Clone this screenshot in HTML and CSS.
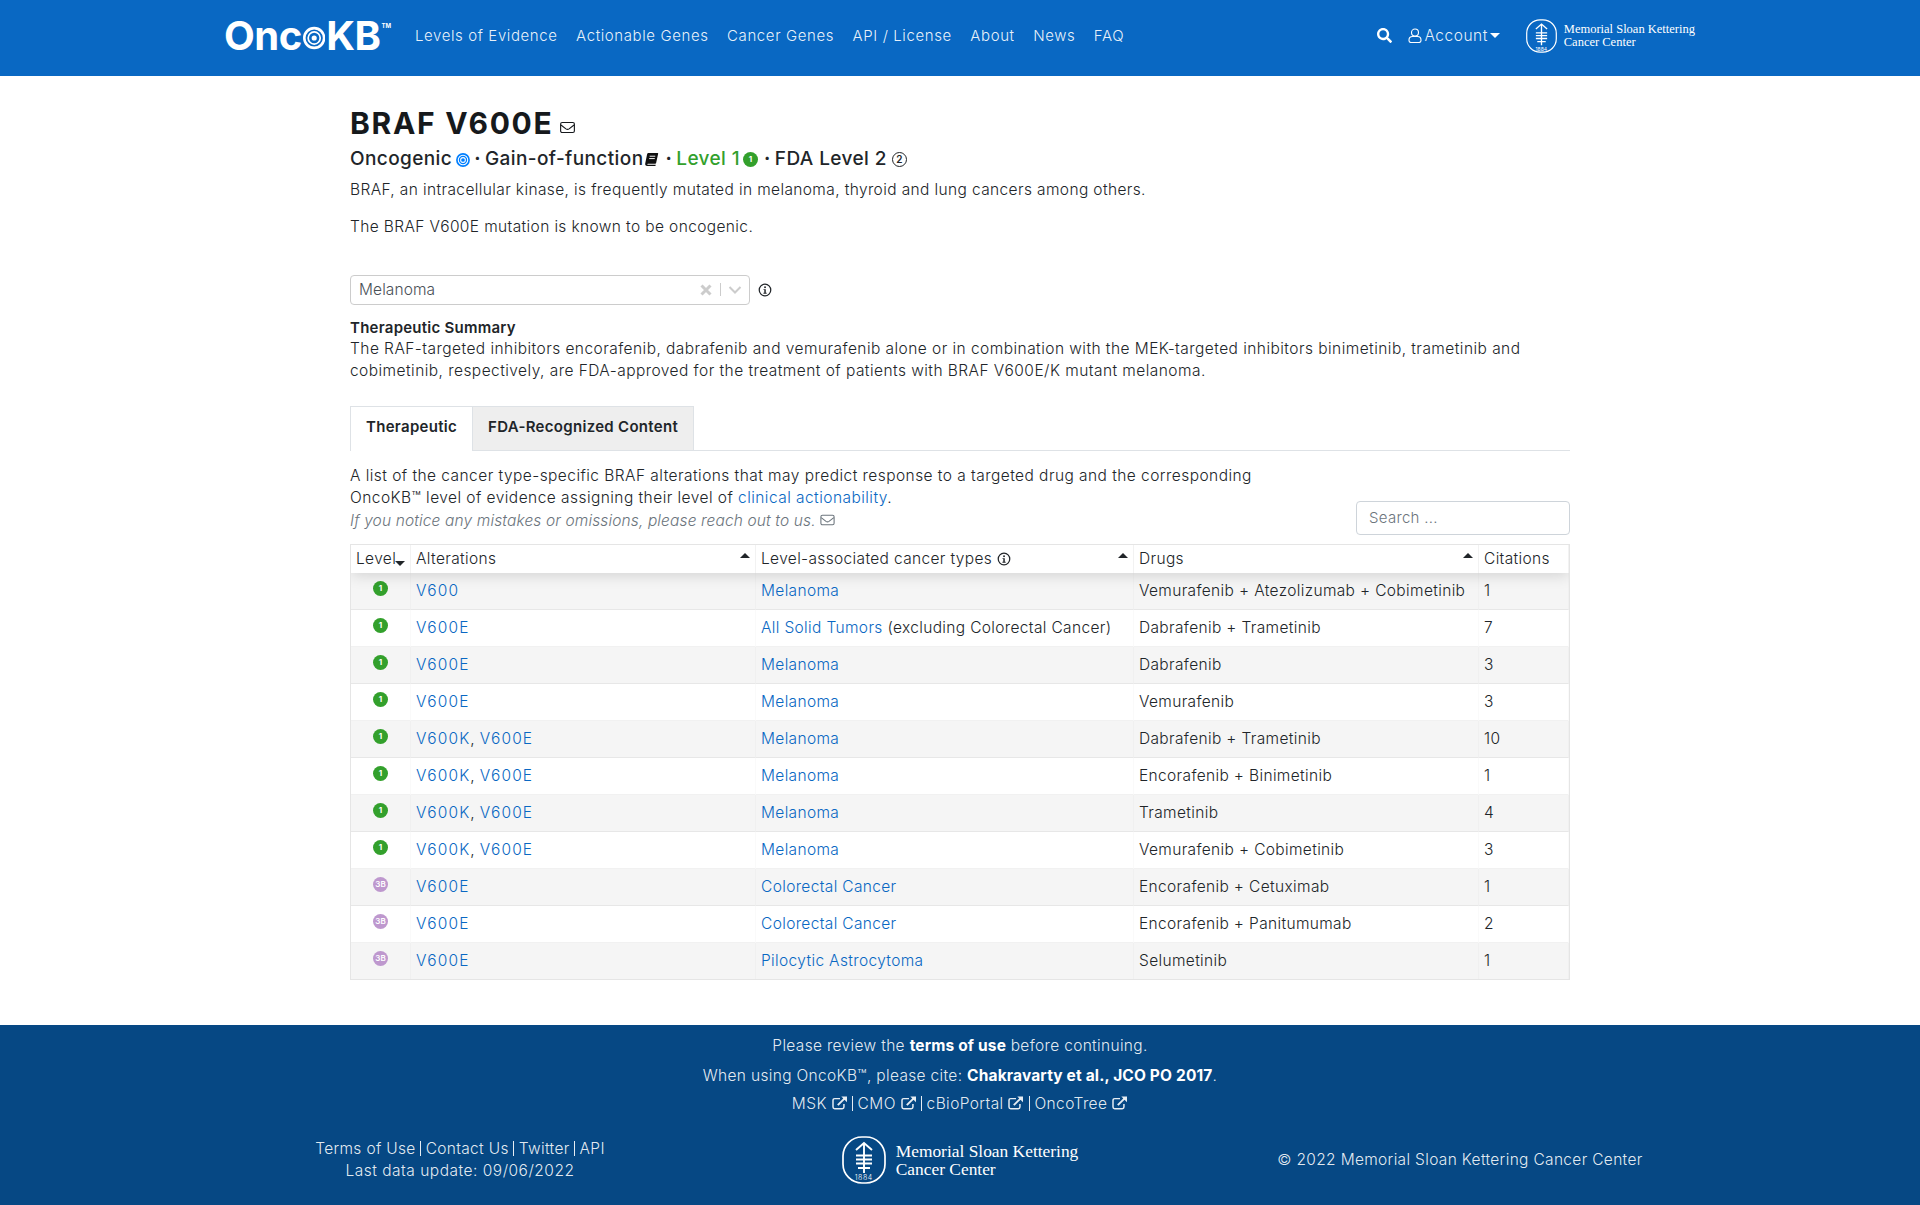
FILE: index.html
```html
<!DOCTYPE html>
<html lang="en">
<head>
  <meta charset="UTF-8">
  <title>BRAF V600E | OncoKB</title>
  <link rel="stylesheet" href="styles.css">
</head>
<body>

<svg class="defs" width="0" height="0">
  <symbol id="envelope" viewBox="0 0 24 20"><rect x="1" y="2" width="22" height="16" rx="2.5" fill="none" stroke="currentColor" stroke-width="1.8"/><path d="M1.5 6l8 6.2c1.5 1.1 3.5 1.1 5 0l8-6.2" fill="none" stroke="currentColor" stroke-width="1.8"/></symbol>
  <symbol id="info" viewBox="0 0 16 16"><circle cx="8" cy="8" r="6.6" fill="none" stroke="currentColor" stroke-width="1.4"/><rect x="7.1" y="3.9" width="1.9" height="1.9" fill="currentColor"/><path d="M6.3 7h2.6v4.2h1v1.1H6.2v-1.1h1V8.100H6.300z" fill="currentColor"/></symbol>
  <symbol id="external" viewBox="0 0 18 16"><path d="M13.500 9v3.500a2 2 0 0 1-2 2H3a2 2 0 0 1-2-2V5a2 2 0 0 1 2-2h6" fill="none" stroke="currentColor" stroke-width="1.700"/><path d="M6.500 10.500L14 3" fill="none" stroke="currentColor" stroke-width="2.200"/><path d="M10.500 0.500H17V7z" fill="currentColor"/></symbol>
  <symbol id="msk" viewBox="0 0 44 48"><rect x="1" y="1" width="42" height="46" rx="19" fill="none" stroke="currentColor" stroke-width="1.700"/><path d="M22 7v30M14 14l8-7 8 7M14 19.500h16M14 23.500h16M14 27.500h16M16 32h12" fill="none" stroke="currentColor" stroke-width="1.900"/></symbol>
</svg>

<header class="topbar">
  <a class="brand">
    <span>Onc</span>
    <svg class="brand-target" viewBox="0 0 26 26"><circle cx="13" cy="13" r="11.500" fill="none" stroke="#fff" stroke-width="3"/><circle cx="13" cy="13" r="7" fill="none" stroke="#fff" stroke-width="2"/><circle cx="13" cy="13" r="3" fill="#fff"/></svg>
    <span>KB</span><sup>TM</sup>
  </a>
  <nav class="nav-links">
    <a>Levels of Evidence</a>
    <a>Actionable Genes</a>
    <a>Cancer Genes</a>
    <a>API / License</a>
    <a>About</a>
    <a>News</a>
    <a>FAQ</a>
  </nav>
  <div class="nav-right">
    <svg class="search-icon" viewBox="0 0 512 512"><path fill="#fff" d="M505 442.700L405.300 343c-4.500-4.500-10.600-7-17-7H372c27.600-35.300 44-79.700 44-128C416 93.100 322.900 0 208 0S0 93.100 0 208s93.100 208 208 208c48.300 0 92.700-16.400 128-44v16.300c0 6.400 2.500 12.500 7 17l99.700 99.700c9.400 9.400 24.600 9.400 33.900 0l28.300-28.300c9.400-9.400 9.400-24.600.1-34zM208 336c-70.700 0-128-57.200-128-128 0-70.700 57.200-128 128-128 70.700 0 128 57.200 128 128 0 70.700-57.200 128-128 128z"/></svg>
    <a class="account">
      <svg class="user-icon" viewBox="0 0 14 15"><circle cx="7" cy="4.500" r="3.500" fill="none" stroke="#fff" stroke-width="1.100"/><path d="M1 12a3.500 3.500 0 0 1 3.500-3.500h5A3.500 3.500 0 0 1 13 12v.5a2 2 0 0 1-2 2H3a2 2 0 0 1-2-2z" fill="none" stroke="#fff" stroke-width="1.100"/></svg>
      Account<i class="caret"></i>
    </a>
    <a class="msk-logo msk-small">
      <span class="msk-mark"><svg><use href="#msk"/></svg><b>1884</b></span>
      <span class="msk-name">Memorial Sloan Kettering<br>Cancer Center</span>
    </a>
  </div>
</header>

<main class="page">
  <h1 class="title">BRAF V600E <svg class="ic-envelope"><use href="#envelope"/></svg></h1>
  <h2 class="subtitle">
    <span>Oncogenic</span>
    <svg class="ic-onco" viewBox="0 0 16 16"><circle cx="8" cy="8" r="7.900" fill="#007fff"/><circle cx="8" cy="8" r="5.400" fill="none" stroke="#fff" stroke-width="1.200"/><circle cx="8" cy="8" r="2.700" fill="none" stroke="#fff" stroke-width="1.200"/></svg>
    <span class="dot">·</span>
    <span>Gain-of-function</span>
    <svg class="ic-book" viewBox="0 0 16 16"><path d="M5 1h9.500c.5 0 .7.400.6.800l-2.200 10c-.1.500-.4.700-.9.700H4.200c-.8 0-1 .9-.2 1h8.500l-.3 1.500H3.500C1.800 15 1 13.800 1.300 12.300L3.300 2.400C3.500 1.500 4.100 1 5 1z" fill="#111"/><path d="M6 4.500h6M5.500 7h6" stroke="#fff"/></svg>
    <span class="dot dot-wide">·</span>
    <span class="level-one">Level 1</span>
    <span class="badge badge-1 badge-sub">1</span>
    <span class="dot">·</span>
    <span>FDA Level 2</span>
    <span class="fda-badge">2</span>
  </h2>
  <p class="intro">BRAF, an intracellular kinase, is frequently mutated in melanoma, thyroid and lung cancers among others.</p>
  <p class="intro">The BRAF V600E mutation is known to be oncogenic.</p>

  <div class="select-row">
    <div class="select-box">
      <span class="select-value">Melanoma</span>
      <svg class="select-x" viewBox="0 0 12 12"><path d="M1.500 1.500l9 9M10.500 1.500l-9 9" stroke="#ccc" stroke-width="3"/></svg>
      <i class="select-sep"></i>
      <svg class="select-chev" viewBox="0 0 14 10"><path d="M1.500 2l5.500 5.500L12.500 2" fill="none" stroke="#ccc" stroke-width="2"/></svg>
    </div>
    <svg class="ic-info"><use href="#info"/></svg>
  </div>

  <h3 class="summary-head">Therapeutic Summary</h3>
  <p class="summary">The RAF-targeted inhibitors encorafenib, dabrafenib and vemurafenib alone or in combination with the MEK-targeted inhibitors binimetinib, trametinib and cobimetinib, respectively, are FDA-approved for the treatment of patients with BRAF V600E/K mutant melanoma.</p>

  <div class="tabs">
    <a class="tab active">Therapeutic</a>
    <a class="tab">FDA-Recognized Content</a>
  </div>

  <div class="table-intro">
    <div class="table-text">
      <p>A list of the cancer type-specific BRAF alterations that may predict response to a targeted drug and the corresponding OncoKB™ level of evidence assigning their level of <a>clinical actionability</a>.</p>
      <p class="notice">If you notice any mistakes or omissions, please reach out to us. <svg class="ic-envelope-sm"><use href="#envelope"/></svg></p>
    </div>
    <div class="search-box">Search ...</div>
  </div>

  <div class="table-wrap">
    <table class="evidence">
      <colgroup>
        <col class="c-level"><col class="c-alt"><col class="c-type"><col class="c-drug"><col class="c-cite">
      </colgroup>
      <thead>
        <tr>
          <th class="th-level">Level<i class="sort-down"></i></th>
          <th class="sortable">Alterations</th>
          <th class="sortable">Level-associated cancer types <svg class="ic-info-sm"><use href="#info"/></svg></th>
          <th class="sortable">Drugs</th>
          <th>Citations</th>
        </tr>
      </thead>
      <tbody>
        <tr><td class="td-level"><span class="badge badge-1">1</span></td><td class="td-alt"><a>V600</a></td><td><a>Melanoma</a></td><td>Vemurafenib + Atezolizumab + Cobimetinib</td><td>1</td></tr>
        <tr><td class="td-level"><span class="badge badge-1">1</span></td><td class="td-alt"><a>V600E</a></td><td><a>All Solid Tumors</a> (excluding Colorectal Cancer)</td><td>Dabrafenib + Trametinib</td><td>7</td></tr>
        <tr><td class="td-level"><span class="badge badge-1">1</span></td><td class="td-alt"><a>V600E</a></td><td><a>Melanoma</a></td><td>Dabrafenib</td><td>3</td></tr>
        <tr><td class="td-level"><span class="badge badge-1">1</span></td><td class="td-alt"><a>V600E</a></td><td><a>Melanoma</a></td><td>Vemurafenib</td><td>3</td></tr>
        <tr><td class="td-level"><span class="badge badge-1">1</span></td><td class="td-alt"><a>V600K</a>, <a>V600E</a></td><td><a>Melanoma</a></td><td>Dabrafenib + Trametinib</td><td>10</td></tr>
        <tr><td class="td-level"><span class="badge badge-1">1</span></td><td class="td-alt"><a>V600K</a>, <a>V600E</a></td><td><a>Melanoma</a></td><td>Encorafenib + Binimetinib</td><td>1</td></tr>
        <tr><td class="td-level"><span class="badge badge-1">1</span></td><td class="td-alt"><a>V600K</a>, <a>V600E</a></td><td><a>Melanoma</a></td><td>Trametinib</td><td>4</td></tr>
        <tr><td class="td-level"><span class="badge badge-1">1</span></td><td class="td-alt"><a>V600K</a>, <a>V600E</a></td><td><a>Melanoma</a></td><td>Vemurafenib + Cobimetinib</td><td>3</td></tr>
        <tr><td class="td-level"><span class="badge badge-3b">3B</span></td><td class="td-alt"><a>V600E</a></td><td><a>Colorectal Cancer</a></td><td>Encorafenib + Cetuximab</td><td>1</td></tr>
        <tr><td class="td-level"><span class="badge badge-3b">3B</span></td><td class="td-alt"><a>V600E</a></td><td><a>Colorectal Cancer</a></td><td>Encorafenib + Panitumumab</td><td>2</td></tr>
        <tr><td class="td-level"><span class="badge badge-3b">3B</span></td><td class="td-alt"><a>V600E</a></td><td><a>Pilocytic Astrocytoma</a></td><td>Selumetinib</td><td>1</td></tr>
      </tbody>
    </table>
  </div>
</main>

<footer class="footer">
  <p class="foot-line">Please review the <b>terms of use</b> before continuing.</p>
  <p class="foot-line">When using OncoKB™, please cite: <b>Chakravarty et al., JCO PO 2017</b>.</p>
  <p class="foot-line foot-links">
    <a>MSK <svg class="ic-ext"><use href="#external"/></svg></a><i class="pipe"></i><a>CMO <svg class="ic-ext"><use href="#external"/></svg></a><i class="pipe"></i><a>cBioPortal <svg class="ic-ext"><use href="#external"/></svg></a><i class="pipe"></i><a>OncoTree <svg class="ic-ext"><use href="#external"/></svg></a>
  </p>
  <div class="foot-bottom">
    <div class="foot-left">
      <div><a>Terms of Use</a><i class="pipe"></i><a>Contact Us</a><i class="pipe"></i><a>Twitter</a><i class="pipe"></i><a>API</a></div>
      <div class="foot-update">Last data update: 09/06/2022</div>
    </div>
    <a class="msk-logo msk-large">
      <span class="msk-mark"><svg><use href="#msk"/></svg><b>1884</b></span>
      <span class="msk-name">Memorial Sloan Kettering<br>Cancer Center</span>
    </a>
    <div class="foot-right">© 2022 Memorial Sloan Kettering Cancer Center</div>
  </div>
</footer>

</body>
</html>
```

FILE: styles.css
```css
* {
  box-sizing: border-box;
}

body {
  margin: 0;
  font-family: 'Inter', 'Liberation Sans', sans-serif;
  font-size: 16px;
  line-height: 22px;
  font-weight: 300;
  color: #212529;
  background: white;
}

p {
  margin: 0;
}

a {
  color: #0968c3;
}

.defs {
  position: absolute;
}

/* header */
.topbar {
  display: flex;
  align-items: center;
  height: 76px;
  padding: 0 225px 5px 224px;
  background: #0968c3;
  color: #fff;
}

.brand {
  display: flex;
  align-items: center;
  width: 167px;
  margin-right: 24px;
  font-size: 40px;
  line-height: 44px;
  font-weight: 700;
  color: #fff;
  letter-spacing: -0.5px;
}

.brand sup {
  font-size: 6px;
  line-height: 6px;
  align-self: flex-start;
  margin: 9px 0 0 1px;
  letter-spacing: 0;
}

.brand-target {
  width: 26px;
  height: 26px;
  margin: 4px 1px 0;
}

.nav-links {
  display: flex;
  gap: 18.500px;
  font-size: 15px;
  letter-spacing: 0.6px;
}

.nav-links a {
  color: rgba(255, 255, 255, 0.92);
}

.nav-right {
  display: flex;
  align-items: center;
  margin-left: auto;
}

.search-icon {
  width: 15px;
  height: 15px;
  margin-right: 16px;
}

.account {
  display: flex;
  align-items: center;
  color: rgba(255, 255, 255, 0.92);
  font-size: 15.500px;
  letter-spacing: 0.5px;
  margin-right: 26px;
}

.user-icon {
  width: 14px;
  height: 15px;
  margin-right: 3px;
}

.caret {
  width: 0;
  height: 0;
  margin-left: 2px;
  border-top: 5px solid #fff;
  border-left: 5px solid transparent;
  border-right: 5px solid transparent;
}

.msk-logo {
  display: flex;
  align-items: center;
  color: #fff;
}

.msk-mark {
  position: relative;
  display: block;
}

.msk-mark svg {
  display: block;
  width: 100%;
  height: 100%;
}

.msk-mark b {
  position: absolute;
  left: 0;
  right: 0;
  text-align: center;
  font-weight: 400;
}

.msk-name {
  font-family: 'Liberation Serif', serif;
  font-weight: 400;
  text-align: left;
  letter-spacing: 0;
}

.msk-small .msk-mark {
  width: 31px;
  height: 36px;
  margin-right: 7px;
}

.msk-small .msk-mark b {
  bottom: 2px;
  font-size: 5px;
  line-height: 6px;
}

.msk-small .msk-name {
  font-size: 12.500px;
  line-height: 12.500px;
}

.msk-large .msk-mark {
  width: 44px;
  height: 50px;
  margin-right: 10px;
}

.msk-large .msk-mark b {
  bottom: 3px;
  font-size: 7px;
  line-height: 8px;
  letter-spacing: 0.5px;
  font-weight: 300;
}

.msk-large .msk-name {
  font-size: 17.400px;
  line-height: 18px;
  white-space: nowrap;
}

/* main column */
.page {
  width: 1220px;
  margin-left: 350px;
  padding-bottom: 45px;
}

.title {
  margin: 0;
  padding-top: 29px;
  font-size: 30px;
  line-height: 36px;
  font-weight: 700;
  color: #16191c;
  letter-spacing: 1.700px;
}

.ic-envelope {
  width: 15px;
  height: 13px;
  margin-left: -2px;
}

.subtitle {
  display: flex;
  align-items: center;
  margin: 0;
  padding-top: 4px;
  height: 32px;
  font-size: 19px;
  line-height: 28px;
  font-weight: 500;
  letter-spacing: 0.4px;
}

.ic-onco {
  width: 14px;
  height: 14px;
  margin: 1px 3px 0 4px;
}

.dot {
  margin: 0 4px 0 1px;
  font-weight: 700;
}

.dot-wide {
  margin: 0 4px 0 6px;
}

.ic-book {
  width: 15px;
  height: 15px;
  margin-left: 1px;
}

.level-one {
  color: #33a02c;
}

.badge {
  display: inline-flex;
  align-items: center;
  justify-content: center;
  width: 15px;
  height: 15px;
  border-radius: 50%;
  color: #fff;
  font-size: 8px;
  line-height: 15px;
  font-weight: 700;
  letter-spacing: 0;
}

.badge-1 {
  background: #33a02c;
}

.badge-3b {
  background: #be98ce;
  font-size: 8px;
  font-weight: 600;
}

.badge-sub {
  margin: 1px 5px 0 3px;
}

.fda-badge {
  display: inline-flex;
  align-items: center;
  justify-content: center;
  width: 15px;
  height: 15px;
  margin-left: 5px;
  border: 1.300px solid #212529;
  border-radius: 50%;
  font-size: 10px;
  font-weight: 600;
  line-height: 12px;
  letter-spacing: 0;
}

.intro {
  padding-top: 15px;
  font-size: 15.500px;
  line-height: 22px;
  letter-spacing: 0.38px;
}

.subtitle + .intro {
  padding-top: 6px;
}

.select-row {
  display: flex;
  align-items: center;
  margin-top: 36.500px;
}

.select-box {
  display: flex;
  align-items: center;
  width: 400px;
  height: 30px;
  padding: 0 6px 0 8px;
  border: 1px solid #ccc;
  border-radius: 4px;
  font-size: 15.500px;
  letter-spacing: 0.1px;
  color: #495057;
}

.select-value {
  flex: 1;
}

.select-x {
  width: 12px;
  height: 12px;
  margin-right: 1px;
}

.select-sep {
  width: 1px;
  height: 13px;
  margin: 0 7px;
  background: #ccc;
}

.select-chev {
  width: 14px;
  height: 10px;
  margin-right: 1px;
}

.ic-info {
  width: 14px;
  height: 14px;
  margin-left: 8px;
}

.summary-head {
  margin: 13px 0 0;
  font-size: 15px;
  line-height: 20px;
  font-weight: 600;
  letter-spacing: 0.25px;
}

.summary {
  font-size: 15.500px;
  line-height: 22px;
  letter-spacing: 0.45px;
}

.tabs {
  display: flex;
  margin-top: 24px;
  height: 45px;
  border-bottom: 1px solid #dee2e6;
}

.tab {
  height: 44px;
  padding: 9px 15px 0;
  font-size: 15px;
  font-weight: 600;
  color: #212529;
  background: #eee;
  border: 1px solid #dee2e6;
  border-left: 0;
  border-bottom: 0;
  letter-spacing: 0.3px;
}

.tab.active {
  height: 45px;
  background: #fff;
  border-left: 1px solid #dee2e6;
}

.table-intro {
  display: flex;
  align-items: flex-end;
  justify-content: space-between;
  padding-top: 14px;
}

.table-text {
  width: 950px;
  padding-bottom: 3px;
  font-size: 15.500px;
  line-height: 22px;
  letter-spacing: 0.45px;
}

.notice {
  margin-top: 1px;
  color: #6c757d;
  font-style: italic;
  letter-spacing: 0.13px;
}

.ic-envelope-sm {
  width: 15px;
  height: 12px;
}

.search-box {
  width: 214px;
  height: 34px;
  padding: 5px 12px;
  border: 1px solid #ced4da;
  border-radius: 4px;
  color: #6c757d;
  font-size: 15px;
  letter-spacing: 0.3px;
}

/* table */
.table-wrap {
  margin-top: 9px;
  border: 1px solid rgba(0, 0, 0, 0.1);
  overflow: hidden;
}

.evidence {
  width: 1218px;
  border-collapse: separate;
  border-spacing: 0;
  table-layout: fixed;
  font-size: 15.500px;
  line-height: 22px;
  letter-spacing: 0.35px;
}

.c-level { width: 60px; }
.c-alt { width: 345px; }
.c-type { width: 378px; }
.c-drug { width: 345px; }
.c-cite { width: 90px; }

.evidence thead {
  box-shadow: 0 2px 15px rgba(0, 0, 0, 0.15);
  position: relative;
}

.evidence th {
  height: 28px;
  padding: 3px 5px;
  font-weight: 300;
  text-align: left;
  background: #fff;
  border-right: 1px solid rgba(0, 0, 0, 0.05);
  position: relative;
  white-space: nowrap;
}

.evidence th.sortable::after {
  content: "";
  position: absolute;
  top: 8px;
  right: 5px;
  border-bottom: 5px solid #212529;
  border-left: 5px solid transparent;
  border-right: 5px solid transparent;
}

.sort-down {
  display: inline-block;
  margin-left: -1px;
  vertical-align: -2px;
  border-top: 5px solid #212529;
  border-left: 5px solid transparent;
  border-right: 5px solid transparent;
}

.ic-info-sm {
  width: 14px;
  height: 14px;
  vertical-align: -2px;
}

.evidence td {
  height: 36.900px;
  padding: 7px 5px;
  border-right: 1px solid rgba(0, 0, 0, 0.02);
  border-bottom: 1px solid rgba(0, 0, 0, 0.05);
}

.evidence td.td-alt a {
  letter-spacing: 1.100px;
}

.evidence tbody tr:last-child td {
  border-bottom: 0;
}

.evidence tbody tr:nth-child(odd) {
  background: #f5f5f5;
}

.evidence td.td-level {
  vertical-align: top;
  padding-top: 8px;
}

.td-level .badge {
  display: flex;
  margin: 0 auto;
}

/* footer */
.footer {
  height: 180px;
  padding-top: 7px;
  background: #064884;
  color: rgba(255, 255, 255, 0.9);
  font-size: 15.500px;
  line-height: 22px;
  letter-spacing: 0.33px;
  text-align: center;
}

.footer a {
  color: rgba(255, 255, 255, 0.9);
}

.footer a.msk-logo {
  color: #fff;
}

.footer b {
  color: #fff;
  font-weight: 700;
  letter-spacing: 0.15px;
}

.foot-line {
  padding-top: 3px;
  height: 30px;
}

.foot-links {
  margin-top: -2px;
  letter-spacing: 0.4px;
}

.foot-update {
  letter-spacing: 0.5px;
}

.pipe {
  display: inline-block;
  width: 1px;
  height: 15px;
  margin: 0 4.500px;
  vertical-align: -2px;
  background: rgba(255, 255, 255, 0.9);
}

.ic-ext {
  width: 16px;
  height: 14px;
  vertical-align: -1px;
}

.foot-bottom {
  display: grid;
  grid-template-columns: 500px 500px 500px;
  align-items: center;
  justify-items: center;
  padding: 0 210px;
  margin-top: 15px;
}

.foot-right {
  white-space: nowrap;
}
```
